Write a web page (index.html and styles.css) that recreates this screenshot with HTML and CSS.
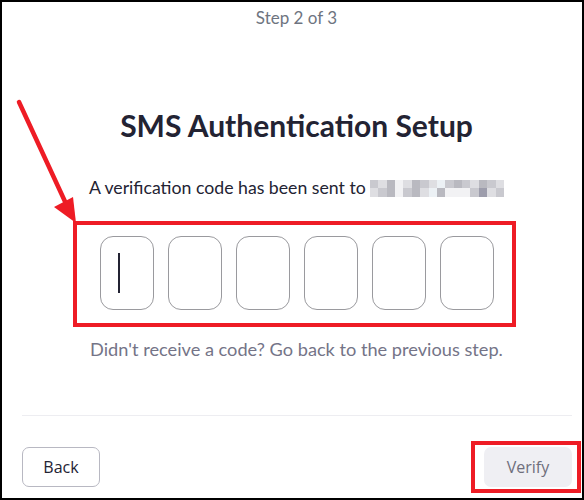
FILE: index.html
```html
<!DOCTYPE html>
<html>
<head>
<meta charset="utf-8">
<link rel="stylesheet" href="styles.css">
</head>
<body>
<div class="frame">
  <div class="step">Step 2 of 3</div>
  <h1 class="title">SMS Authentication Setup</h1>
  <p class="sent">A verification code has been sent to <span class="blur"><i class="a"></i><i class="b"></i><i class="c"></i><i class="d"></i><i class="b"></i><i class="c"></i><i class="a"></i><i class="b"></i><i class="e"></i><i class="a"></i><i class="c"></i><i class="a"></i><i class="b"></i><i class="c"></i><i class="a"></i><i class="b"></i><i class="b"></i><i class="a"></i><i class="c"></i><i class="d"></i><i class="a"></i><i class="c"></i><i class="b"></i><i class="e"></i><i class="c"></i><i class="d"></i><i class="d"></i><i class="d"></i><i class="a"></i><i class="f"></i><i class="b"></i><i class="a"></i></span></p>
  <div class="codebox">
    <div class="digit"><span class="caret"></span></div>
    <div class="digit"></div>
    <div class="digit"></div>
    <div class="digit"></div>
    <div class="digit"></div>
    <div class="digit"></div>
  </div>
  <p class="hint">Didn't receive a code? Go back to the previous step.</p>
  <div class="spacer"></div>
  <div class="footer">
    <button class="btn back">Back</button>
    <div class="mark"><button class="btn verify">Verify</button></div>
  </div>
  <svg class="arrow" width="100" height="240" viewBox="0 0 100 240">
    <line x1="19" y1="102" x2="68" y2="208" stroke="#ee1c25" stroke-width="4.5" stroke-linecap="round"/>
    <polygon points="76,223 54,207 73,197" fill="#ee1c25"/>
  </svg>
</div>
</body>
</html>
```
FILE: styles.css
```css
html, body { margin: 0; padding: 0; background: #fff; }
.frame {
  position: relative;
  box-sizing: border-box;
  width: 584px;
  height: 500px;
  border: 2px solid #000;
  padding-left: 9px;
  display: flex;
  flex-direction: column;
  align-items: center;
  font-family: Lato, "Open Sans", sans-serif;
}
.step {
  margin-top: 6px;
  font-family: Lato, sans-serif;
  font-size: 17px;
  color: #6e7480;
  line-height: 20px;
}
.title {
  margin: 79px 0 0;
  font-family: Lato, sans-serif;
  font-weight: 700;
  font-size: 30px;
  line-height: 36px;
  color: #232333;
}
.sent {
  margin: 35px 0 0;
  font-size: 17.7px;
  line-height: 20px;
  color: #232333;
  display: flex;
  align-items: center;
}
.blur {
  display: inline-grid;
  grid-template-columns: repeat(16, 8.4px);
  grid-template-rows: 8.5px 8.5px;
  margin-left: 4px;
}
.blur i { display: block; }
.blur .a { background: #c9c9cf; }
.blur .b { background: #dedee2; }
.blur .c { background: #b9b9c0; }
.blur .d { background: #f2f2f4; }
.blur .e { background: #ecf1f5; }
.blur .f { background: #9d9dac; }
.codebox {
  align-self: flex-start;
  margin: 23px 0 0 62px;
  box-sizing: border-box;
  width: 443px;
  height: 106px;
  border: 4px solid #ee1c25;
  padding: 11px 0 0 23px;
  display: flex;
  align-items: flex-start;
  gap: 14px;
}
.digit {
  box-sizing: border-box;
  width: 54px;
  height: 74px;
  border: 1px solid #9a9a9e;
  border-radius: 13px;
  display: flex;
  align-items: center;
  padding-left: 17px;
}
.caret { width: 1.5px; height: 40px; background: #232333; }
.hint {
  margin: 12px 0 0;
  font-family: Lato, sans-serif;
  font-size: 18.2px;
  line-height: 20px;
  color: #747487;
}
.spacer { flex: 1; }
.footer {
  align-self: stretch;
  box-sizing: border-box;
  margin: 0 10px 0 11px;
  height: 83px;
  border-top: 1px solid #ededf1;
  display: flex;
  justify-content: space-between;
  align-items: flex-end;
}
.btn {
  box-sizing: border-box;
  height: 40px;
  border-radius: 7px;
  font-family: "Open Sans", sans-serif;
  font-size: 16px;
  padding: 0;
}
.back {
  width: 78px;
  margin-bottom: 11px;
  background: #fff;
  border: 1px solid #b8b8c2;
  color: #232333;
}
.mark {
  margin: 0 -9px 5px 0;
  border: 4px solid #ee1c25;
  padding: 2px 5px 2px 9px;
  display: flex;
}
.verify {
  width: 88px;
  background: #efeff3;
  border: none;
  color: #6e6e7c;
}
.arrow { position: absolute; left: -2px; top: -2px; }
```
